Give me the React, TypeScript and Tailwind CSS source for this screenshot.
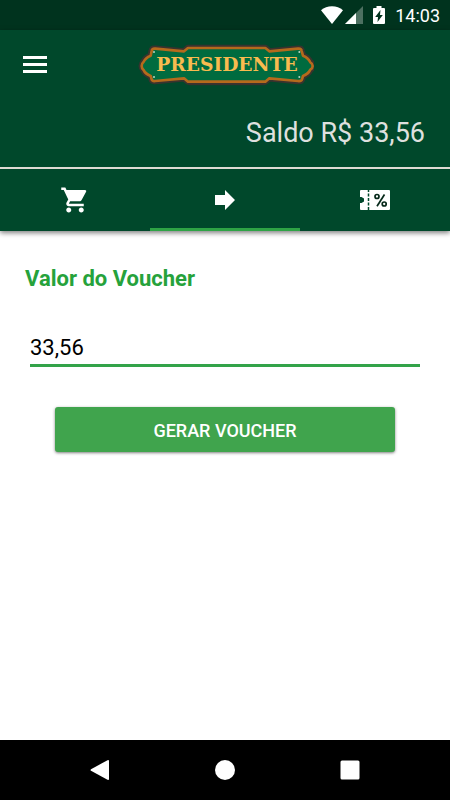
import { useState } from "react";
import { MdShoppingCart } from "react-icons/md";

function StatusBar() {
  return (
    <div className="flex h-[30px] items-center justify-end bg-[#00331e] pr-2.5 text-white">
      <svg className="h-5 w-[22px]" viewBox="0 0 22 20" fill="currentColor" aria-hidden="true">
        <path d="M0 5.2C3 2.6 6.8 1.2 11 1.2S19 2.6 22 5.2L11 19Z" />
      </svg>
      <svg className="ml-0.5 h-5 w-[18px]" viewBox="0 0 18 20" aria-hidden="true">
        <path d="M0 19L18 1V19Z" fill="#4d7061" />
        <path d="M0 19L11 8V19Z" fill="#fff" />
      </svg>
      <svg className="ml-2.5 h-5 w-3" viewBox="0 0 12 20" fill="currentColor" aria-hidden="true">
        <path
          fillRule="evenodd"
          d="M3.5 1H8.500V3H11Q12 3 12 4V18Q12 19 11 19H1Q0 19 0 18V4Q0 3 1 3H3.500ZM7.500 5L2.200 12H5L4.500 17L9.800 10H7Z"
        />
      </svg>
      <span className="ml-2.5 pt-px text-lg leading-5">14:03</span>
    </div>
  );
}

const PLATE =
  "M174 37H406L418 47L504 39Q514 38 515 46L519 60Q535 66 541 80Q548 84 548 91Q548 98 541 102Q535 115 519 121L516 131Q514 137 504 136L418 128L406 138H174L162 128L76 136Q66 137 65 131L62 121Q46 115 40 102Q35 98 35 91Q35 84 40 80Q46 66 62 60L65 46Q66 38 76 39L162 47Z";

function Logo() {
  return (
    <svg className="h-[42px] w-[178px]" viewBox="18 25 534 126" role="img" aria-label="Presidente">
      <path d="M170 132H410L404 149H178Z" fill="#33332f" />
      <path d={PLATE} fill="#3a332e" stroke="#3a332e" strokeWidth="19" strokeLinejoin="round" />
      <path d={PLATE} fill="#006b3f" stroke="#b56a1c" strokeWidth="8" strokeLinejoin="round" />
      <g fill="#b9d3c2">
        <circle cx="72" cy="49" r="3" />
        <circle cx="508" cy="49" r="3" />
        <circle cx="72" cy="124" r="3" />
        <circle cx="508" cy="124" r="3" />
      </g>
      <text
        x="291"
        y="107"
        textAnchor="middle"
        fontSize="56"
        fontWeight="700"
        fill="#f9bb4f"
        className="font-['DejaVu_Serif',serif]"
      >
        PRESIDENTE
      </text>
    </svg>
  );
}

function ArrowIcon() {
  return (
    <svg className="h-5 w-5" viewBox="0 0 20 20" fill="currentColor" aria-hidden="true">
      <path d="M0 5H10V0L20 10L10 20V15H0Z" />
    </svg>
  );
}

function CouponIcon() {
  return (
    <svg className="h-5 w-[30px]" viewBox="0 0 30 20" aria-hidden="true">
      <path
        d="M1 0H29Q30 0 30 1V19Q30 20 29 20H1Q0 20 0 19V13H1.500L4 11.500V8.500L1.500 7H0V1Q0 0 1 0Z"
        fill="#fff"
      />
      <path d="M8.500 0V20" stroke="#00482b" strokeWidth="1.500" strokeDasharray="3 1.500" strokeDashoffset="1" />
      <g fill="none" stroke="#06291a" strokeWidth="1.700">
        <circle cx="17" cy="6.500" r="2" />
        <circle cx="24.200" cy="14" r="2" />
        <path d="M24.500 4.500L17 16.200" />
      </g>
    </svg>
  );
}

const tabs = [
  { id: "shop", label: "Loja", icon: <MdShoppingCart size={30} /> },
  { id: "voucher", label: "Voucher", icon: <ArrowIcon /> },
  { id: "coupons", label: "Cupons", icon: <CouponIcon /> },
];

function Header() {
  const [active, setActive] = useState("voucher");

  return (
    <header className="bg-[#00482b] text-white shadow-[0_2px_5px_rgba(0,0,0,0.5)]">
      <div className="grid h-[70px] grid-cols-[1fr_auto_1fr] items-center px-5">
        <button type="button" aria-label="Menu" className="justify-self-start">
          <svg className="h-[30px] w-[30px]" viewBox="0 0 30 30" fill="currentColor" aria-hidden="true">
            <path d="M3 6H27V9H3ZM3 13H27V16H3ZM3 20H27V23H3Z" />
          </svg>
        </button>
        <Logo />
      </div>
      <p className="border-b-2 border-[#dedbd3] px-[25px] pt-[15px] pb-4 text-right text-[27px] leading-9 text-[#dfe0df]">
        Saldo R$ 33,56
      </p>
      <nav className="grid h-[62px] grid-cols-3">
        {tabs.map((tab) => (
          <button
            key={tab.id}
            type="button"
            aria-label={tab.label}
            onClick={() => setActive(tab.id)}
            className={`flex items-center justify-center border-t-3 border-t-transparent border-b-3 ${
              active === tab.id ? "border-b-[#2ea345]" : "border-b-transparent"
            }`}
          >
            {tab.icon}
          </button>
        ))}
      </nav>
    </header>
  );
}

function VoucherForm() {
  const [value, setValue] = useState("33,56");

  return (
    <form className="flex flex-1 flex-col px-[25px] pt-8" onSubmit={(e) => e.preventDefault()}>
      <label htmlFor="voucher" className="text-[22px] leading-8 font-bold text-[#26a23b]">
        Valor do Voucher
      </label>
      <input
        id="voucher"
        type="text"
        inputMode="decimal"
        value={value}
        onChange={(e) => setValue(e.target.value)}
        className="mx-[5px] mt-9 h-9 border-b-3 border-[#33a349] text-[22px] text-black outline-none"
      />
      <button
        type="submit"
        className="mx-[30px] mt-10 h-[45px] rounded-[3px] bg-[#40a44d] pt-px text-[18px] font-medium text-white shadow-[0_1px_3px_rgba(0,0,0,0.5)]"
      >
        GERAR VOUCHER
      </button>
    </form>
  );
}

function NavigationBar() {
  return (
    <nav className="flex h-[60px] items-center justify-center gap-[105px] bg-black text-white">
      <button type="button" aria-label="Voltar">
        <svg className="h-5 w-5" viewBox="0 0 20 20" fill="currentColor" aria-hidden="true">
          <path d="M1 9.200L17.500 .200Q19 -.300 19 1V19Q19 20.300 17.500 19.800L1 10.800Q0 10 1 9.200Z" />
        </svg>
      </button>
      <button type="button" aria-label="Início">
        <svg className="h-5 w-5" viewBox="0 0 20 20" fill="currentColor" aria-hidden="true">
          <circle cx="10" cy="10" r="10" />
        </svg>
      </button>
      <button type="button" aria-label="Recentes">
        <svg className="h-5 w-5" viewBox="0 0 20 20" fill="currentColor" aria-hidden="true">
          <rect width="19" height="19" x="0.500" y="0.500" rx="1.500" />
        </svg>
      </button>
    </nav>
  );
}

export default function App() {
  return (
    <div className="flex min-h-screen flex-col bg-white font-[Roboto,sans-serif]">
      <StatusBar />
      <Header />
      <VoucherForm />
      <NavigationBar />
    </div>
  );
}
